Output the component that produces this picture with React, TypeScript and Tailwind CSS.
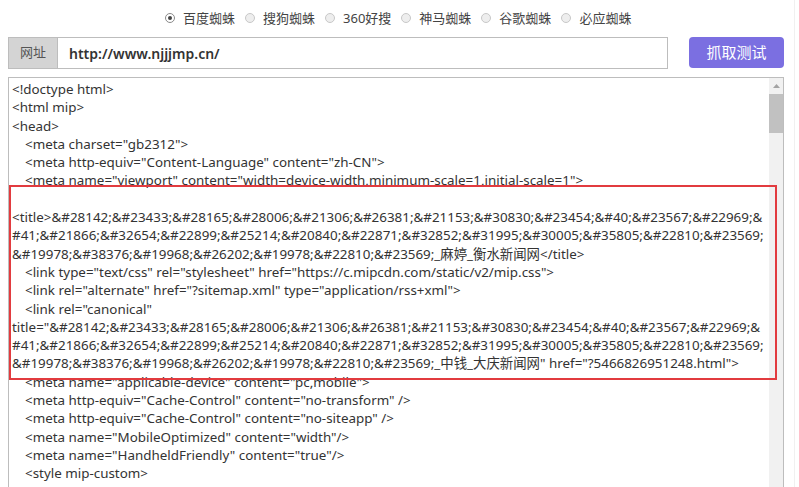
import React from "react";

const radios = ["百度蜘蛛", "搜狗蜘蛛", "360好搜", "神马蜘蛛", "谷歌蜘蛛", "必应蜘蛛"];

type Line = { t: string; indent?: boolean };

const lines: Line[] = [
  { t: "<!doctype html>" },
  { t: "<html mip>" },
  { t: "<head>" },
  { t: '<meta charset="gb2312">', indent: true },
  { t: '<meta http-equiv="Content-Language" content="zh-CN">', indent: true },
  { t: '<meta name="viewport" content="width=device-width,minimum-scale=1,initial-scale=1">', indent: true },
  { t: "" },
  { t: "<title>&#28142;&#23433;&#28165;&#28006;&#21306;&#26381;&#21153;&#30830;&#23454;&#40;&#23567;&#22969;&" },
  { t: "#41;&#21866;&#32654;&#22899;&#25214;&#20840;&#22871;&#32852;&#31995;&#30005;&#35805;&#22810;&#23569;" },
  { t: "&#19978;&#38376;&#19968;&#26202;&#19978;&#22810;&#23569;_麻婷_衡水新闻网</title>" },
  { t: '<link type="text/css" rel="stylesheet" href="https://c.mipcdn.com/static/v2/mip.css">', indent: true },
  { t: '<link rel="alternate" href="?sitemap.xml" type="application/rss+xml">', indent: true },
  { t: '<link rel="canonical"', indent: true },
  { t: 'title="&#28142;&#23433;&#28165;&#28006;&#21306;&#26381;&#21153;&#30830;&#23454;&#40;&#23567;&#22969;&' },
  { t: "#41;&#21866;&#32654;&#22899;&#25214;&#20840;&#22871;&#32852;&#31995;&#30005;&#35805;&#22810;&#23569;" },
  { t: '&#19978;&#38376;&#19968;&#26202;&#19978;&#22810;&#23569;_中钱_大庆新闻网" href="?5466826951248.html">' },
  { t: '<meta name="applicable-device" content="pc,mobile">', indent: true },
  { t: '<meta http-equiv="Cache-Control" content="no-transform" />', indent: true },
  { t: '<meta http-equiv="Cache-Control" content="no-siteapp" />', indent: true },
  { t: '<meta name="MobileOptimized" content="width"/>', indent: true },
  { t: '<meta name="HandheldFriendly" content="true"/>', indent: true },
  { t: "<style mip-custom>", indent: true },
  { t: "" },
  { t: "" },
];

export default function App() {
  return (
    <div
      className="relative w-[799px] h-[487px] overflow-hidden bg-white text-[#333]"
      style={{ fontFamily: '"Noto Sans", "Noto Sans CJK SC", sans-serif' }}
    >
      {/* radio row */}
      <div className="h-[36px] flex items-center pl-[165px] text-[13px] text-[#444]">
        {radios.map((r, i) => (
          <div key={r} className="flex items-center mr-[10px]">
            <span
              className={
                "w-[10px] h-[10px] rounded-full border flex items-center justify-center mr-[8px] " +
                (i === 0 ? "border-[#8a8a8a] bg-white" : "border-[#c8c8c8] bg-[#eeeeee]")
              }
            >
              {i === 0 && <span className="w-[4px] h-[4px] rounded-full bg-[#444]" />}
            </span>
            <span className="leading-none">{r}</span>
          </div>
        ))}
      </div>

      {/* url row */}
      <div className="flex items-start px-[8px]">
        <div className="flex h-[32px] w-[660px] border border-[#bdbdbd] mt-[1px]">
          <div className="w-[49px] bg-[#d4d4d4] flex items-center justify-center text-[13px] text-[#555] border-r border-[#bdbdbd]">
            网址
          </div>
          <div className="flex-1 flex items-center pl-[11px] text-[14px] font-semibold text-[#333]">
            http://www.njjjmp.cn/
          </div>
        </div>
        <div className="ml-[21px] mt-[1px] w-[95px] h-[31px] rounded-[4px] bg-[#7b6fe1] text-white text-[15px] flex items-center justify-center">
          抓取测试
        </div>
      </div>

      {/* code area */}
      <div className="ml-[8px] mt-[8px] w-[776px] h-[420px] border border-[#bdbdbd] relative flex">
        <div className="flex-1 pt-[2px] pl-[3px] text-[13.4px] leading-[18.3px] text-[#333] whitespace-pre overflow-hidden">
          {lines.map((l, i) => (
            <div key={i} className={l.indent ? "pl-[13px] h-[18.3px]" : "h-[18.3px]"}>
              {l.t}
            </div>
          ))}
        </div>
        <div className="w-[14px] bg-[#f1f1f1] flex flex-col items-center">
          <div className="h-[16px] flex items-center justify-center">
            <svg width="7" height="4" viewBox="0 0 7 4">
              <path d="M0 4 L3.5 0 L7 4 Z" fill="#a3a3a3" />
            </svg>
          </div>
          <div className="w-[14px] h-[39px] bg-[#c1c1c1]" />
        </div>
        <div className="absolute left-[0px] top-[107px] w-[768px] h-[195px] border-2 border-[#e23b3f]" />
      </div>
      <div className="absolute left-[794px] top-0 w-px h-full bg-[#f0f0f0]" />
    </div>
  );
}
